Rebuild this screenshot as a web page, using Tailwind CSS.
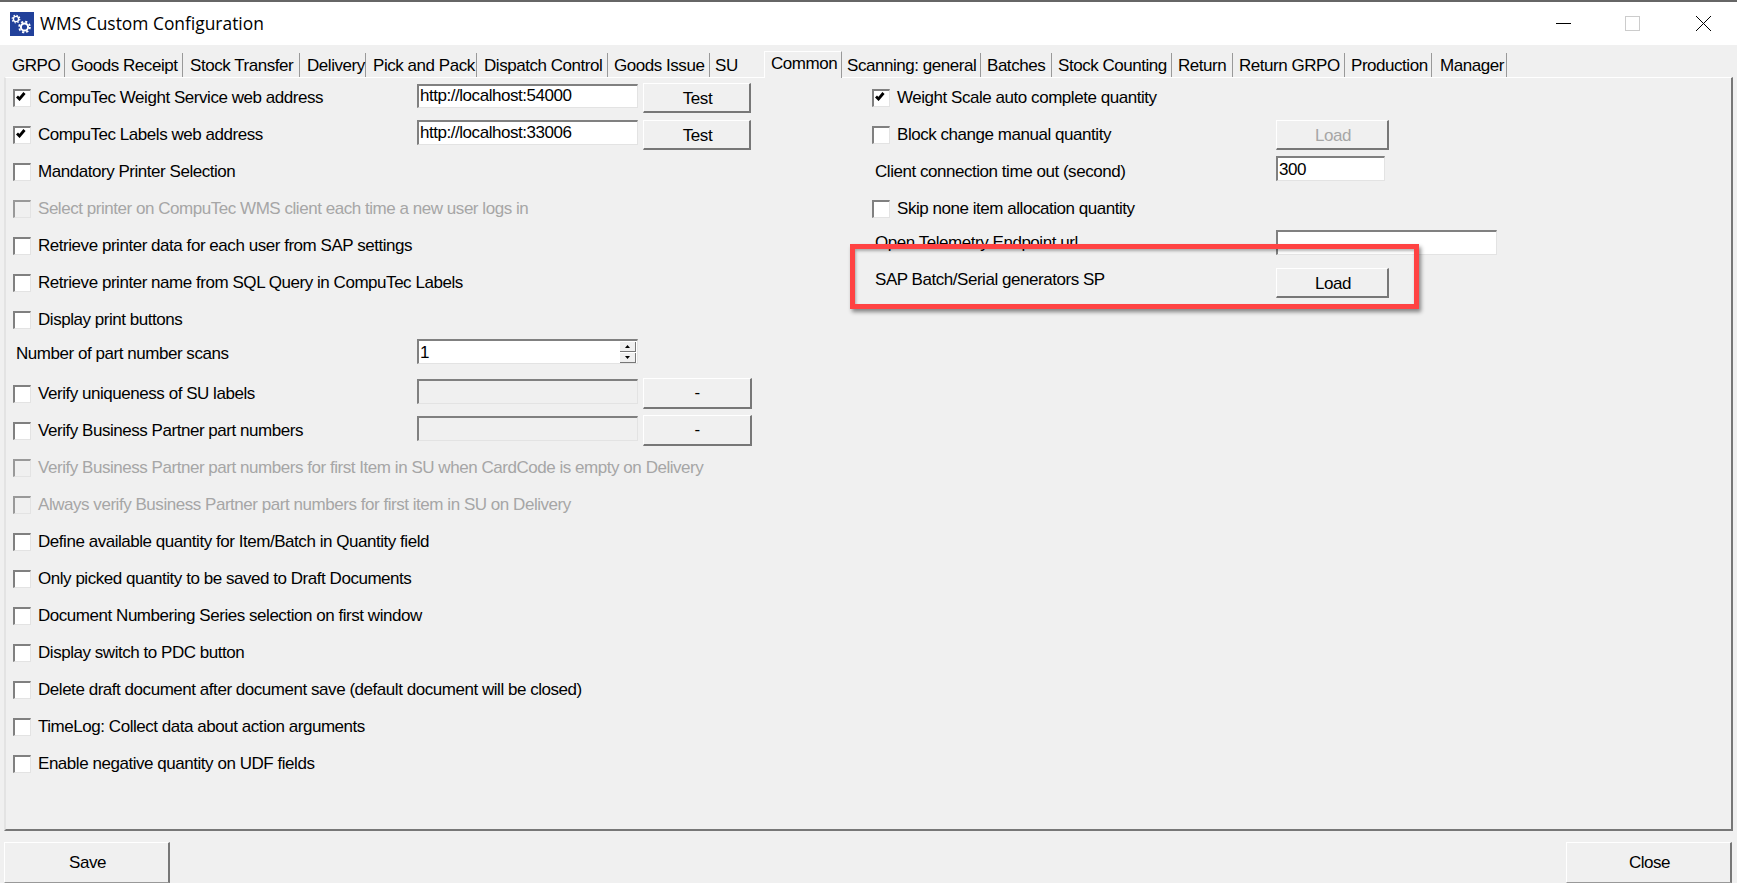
<!DOCTYPE html>
<html lang="en">
  <head>
    <meta charset="UTF-8" />
    <title>WMS Custom Configuration</title>
    <script src="https://cdn.jsdelivr.net/npm/@tailwindcss/browser@4"></script>
  </head>
  <body class="relative h-[883px] w-[1737px] overflow-hidden bg-[#f0f0f0] font-['Liberation_Sans',sans-serif] text-[17px] tracking-[-0.46px] whitespace-nowrap text-black">
    <!-- title bar -->
    <header class="flex h-[45px] items-center border-t-2 border-[#666] bg-white pl-[10px] tracking-normal">
      <svg class="h-6 w-6" viewBox="0 0 24 24">
        <rect width="24" height="24" fill="#21409a" />
        <g fill="none" stroke="#fff">
          <circle cx="6" cy="7" r="2.6" stroke-width="1.4" />
          <circle cx="6" cy="7" r="3.8" stroke-width="1.2" stroke-dasharray="1.4 1.58" />
          <circle cx="14.5" cy="15" r="3.6" stroke-width="2" />
          <circle cx="14.5" cy="15" r="5.4" stroke-width="1.8" stroke-dasharray="2.2 2.05" />
        </g>
      </svg>
      <span class="ml-[6px] font-['Open_Sans',sans-serif] text-[17.4px]">WMS Custom Configuration</span>
      <div class="ml-auto flex items-center pr-[26px]">
        <div class="h-px w-[15px] bg-black"></div>
        <div class="ml-[54px] h-[15px] w-[15px] border border-[#ccc]"></div>
        <svg class="ml-[56px] h-[15px] w-[15px]" viewBox="0 0 15 15"><path d="M0 0L15 15M15 0L0 15" stroke="#000" stroke-width="1" /></svg>
      </div>
    </header>

    <!-- tabs -->
    <nav class="mt-[8px] flex h-[24px] items-stretch pl-[7px] leading-[26px]">
      <div class="w-[58px] border-r border-[#999] pl-[5px]">GRPO</div>
      <div class="w-[118px] border-r border-[#999] pl-[6px]">Goods Receipt</div>
      <div class="w-[117px] border-r border-[#999] pl-[7px]">Stock Transfer</div>
      <div class="w-[66px] border-r border-[#999] pl-[7px]">Delivery</div>
      <div class="w-[111px] border-r border-[#999] pl-[7px]">Pick and Pack</div>
      <div class="w-[131px] border-r border-[#999] pl-[7px]">Dispatch Control</div>
      <div class="w-[102px] border-r border-[#999] pl-[6px]">Goods Issue</div>
      <div class="w-[54px] pl-[5px]">SU</div>
      <div class="z-10 -mt-[2px] -mb-[1px] w-[78px] border-t border-r border-l border-t-white border-r-[#999] border-l-white bg-[#f0f0f0] pl-[6px] leading-[23px]">Common</div>
      <div class="w-[139px] border-r border-[#999] pl-[5px]">Scanning: general</div>
      <div class="w-[71px] border-r border-[#999] pl-[6px]">Batches</div>
      <div class="w-[120px] border-r border-[#999] pl-[6px]">Stock Counting</div>
      <div class="w-[61px] border-r border-[#999] pl-[6px]">Return</div>
      <div class="w-[112px] border-r border-[#999] pl-[6px]">Return GRPO</div>
      <div class="w-[87px] border-r border-[#999] pl-[6px]">Production</div>
      <div class="w-[75px] border-r border-[#999] pl-[8px]">Manager</div>
    </nav>

    <!-- Common tab -->
    <main class="mx-[4px] flex h-[754px] border-t border-r-2 border-b-2 border-l-2 border-t-white border-r-[#777] border-b-[#777] border-l-[#e3e3e3] pt-[1px]">
      <section class="w-[866px] flex-none">
        <div class="flex h-[37px] items-center">
          <span class="ml-[7px] h-[18px] w-[18px] flex-none border-t-2 border-r border-b border-l-2 border-t-[#808080] border-r-[#e3e3e3] border-b-[#e3e3e3] border-l-[#808080] bg-white pt-[1px] pl-[1px]">
            <svg class="h-[9px] w-[10px]" viewBox="0 0 10 9"><path d="M1 4.5L3.5 7L8.5 1" fill="none" stroke="#000" stroke-width="2.8" /></svg>
          </span>
          <span class="ml-[7px] w-[379px]">CompuTec Weight Service web address</span>
          <input class="mb-[4px] h-[24px] w-[221px] border-t-2 border-r border-b border-l-2 border-t-[#808080] border-r-[#e3e3e3] border-b-[#e3e3e3] border-l-[#808080] bg-white pl-[1px]" value="http://localhost:54000" />
          <button class="ml-[5px] h-[30px] w-[108px] border-t border-r-2 border-b-2 border-l border-t-white border-r-[#777] border-b-[#777] border-l-white pt-[2px] pl-[2px]">Test</button>
        </div>
        <div class="flex h-[37px] items-center">
          <span class="ml-[7px] h-[18px] w-[18px] flex-none border-t-2 border-r border-b border-l-2 border-t-[#808080] border-r-[#e3e3e3] border-b-[#e3e3e3] border-l-[#808080] bg-white pt-[1px] pl-[1px]">
            <svg class="h-[9px] w-[10px]" viewBox="0 0 10 9"><path d="M1 4.5L3.5 7L8.5 1" fill="none" stroke="#000" stroke-width="2.8" /></svg>
          </span>
          <span class="ml-[7px] w-[379px]">CompuTec Labels web address</span>
          <input class="mb-[5px] h-[25px] w-[221px] border-t-2 border-r border-b border-l-2 border-t-[#808080] border-r-[#e3e3e3] border-b-[#e3e3e3] border-l-[#808080] bg-white pl-[1px]" value="http://localhost:33006" />
          <button class="ml-[5px] h-[30px] w-[108px] border-t border-r-2 border-b-2 border-l border-t-white border-r-[#777] border-b-[#777] border-l-white pt-[2px] pl-[2px]">Test</button>
        </div>
        <div class="flex h-[37px] items-center">
          <span class="ml-[7px] h-[18px] w-[18px] flex-none border-t-2 border-r border-b border-l-2 border-t-[#808080] border-r-[#e3e3e3] border-b-[#e3e3e3] border-l-[#808080] bg-white"></span>
          <span class="ml-[7px]">Mandatory Printer Selection</span>
        </div>
        <div class="flex h-[37px] items-center text-[#a6a6a6]">
          <span class="ml-[7px] h-[18px] w-[18px] flex-none border-t-2 border-r border-b border-l-2 border-t-[#999] border-r-[#e3e3e3] border-b-[#e3e3e3] border-l-[#999]"></span>
          <span class="ml-[7px]">Select printer on CompuTec WMS client each time a new user logs in</span>
        </div>
        <div class="flex h-[37px] items-center">
          <span class="ml-[7px] h-[18px] w-[18px] flex-none border-t-2 border-r border-b border-l-2 border-t-[#808080] border-r-[#e3e3e3] border-b-[#e3e3e3] border-l-[#808080] bg-white"></span>
          <span class="ml-[7px]">Retrieve printer data for each user from SAP settings</span>
        </div>
        <div class="flex h-[37px] items-center">
          <span class="ml-[7px] h-[18px] w-[18px] flex-none border-t-2 border-r border-b border-l-2 border-t-[#808080] border-r-[#e3e3e3] border-b-[#e3e3e3] border-l-[#808080] bg-white"></span>
          <span class="ml-[7px]">Retrieve printer name from SQL Query in CompuTec Labels</span>
        </div>
        <div class="flex h-[37px] items-center">
          <span class="ml-[7px] h-[18px] w-[18px] flex-none border-t-2 border-r border-b border-l-2 border-t-[#808080] border-r-[#e3e3e3] border-b-[#e3e3e3] border-l-[#808080] bg-white"></span>
          <span class="ml-[7px]">Display print buttons</span>
        </div>
        <div class="flex h-[31px] items-center">
          <span class="ml-[10px] w-[401px]">Number of part number scans</span>
          <div class="mb-[4px] flex h-[25px] w-[221px] items-center justify-between border-t-2 border-r border-b border-l-2 border-t-[#808080] border-r-[#e3e3e3] border-b-[#e3e3e3] border-l-[#808080] bg-white pl-[1px]">
            <span class="pt-[2px]">1</span>
            <div class="mr-px flex w-[16px] flex-col gap-px">
              <div class="flex h-[10px] items-center justify-center border-r border-b border-r-[#777] border-b-[#777] bg-[#f0f0f0]">
                <svg class="h-[3px] w-[5px]" viewBox="0 0 5 3"><path d="M2.5 0L5 3H0Z" fill="#000" /></svg>
              </div>
              <div class="flex h-[10px] items-center justify-center border-r border-b border-r-[#777] border-b-[#777] bg-[#f0f0f0]">
                <svg class="h-[3px] w-[5px]" viewBox="0 0 5 3"><path d="M0 0H5L2.5 3Z" fill="#000" /></svg>
              </div>
            </div>
          </div>
        </div>
        <div class="mt-[6px] flex h-[37px] items-center">
          <span class="ml-[7px] h-[18px] w-[18px] flex-none border-t-2 border-r border-b border-l-2 border-t-[#808080] border-r-[#e3e3e3] border-b-[#e3e3e3] border-l-[#808080] bg-white"></span>
          <span class="ml-[7px] w-[379px]">Verify uniqueness of SU labels</span>
          <div class="mb-[5px] h-[25px] w-[221px] border-t-2 border-r border-b border-l-2 border-t-[#808080] border-r-[#e3e3e3] border-b-[#e3e3e3] border-l-[#808080]"></div>
          <button class="ml-[5px] h-[31px] w-[109px] border-t border-r-2 border-b-2 border-l border-t-white border-r-[#777] border-b-[#777] border-l-white">-</button>
        </div>
        <div class="flex h-[37px] items-center">
          <span class="ml-[7px] h-[18px] w-[18px] flex-none border-t-2 border-r border-b border-l-2 border-t-[#808080] border-r-[#e3e3e3] border-b-[#e3e3e3] border-l-[#808080] bg-white"></span>
          <span class="ml-[7px] w-[379px]">Verify Business Partner part numbers</span>
          <div class="mb-[5px] h-[25px] w-[221px] border-t-2 border-r border-b border-l-2 border-t-[#808080] border-r-[#e3e3e3] border-b-[#e3e3e3] border-l-[#808080]"></div>
          <button class="ml-[5px] h-[31px] w-[109px] border-t border-r-2 border-b-2 border-l border-t-white border-r-[#777] border-b-[#777] border-l-white">-</button>
        </div>
        <div class="flex h-[37px] items-center text-[#a6a6a6]">
          <span class="ml-[7px] h-[18px] w-[18px] flex-none border-t-2 border-r border-b border-l-2 border-t-[#999] border-r-[#e3e3e3] border-b-[#e3e3e3] border-l-[#999]"></span>
          <span class="ml-[7px]">Verify Business Partner part numbers for first Item in SU when CardCode is empty on Delivery</span>
        </div>
        <div class="flex h-[37px] items-center text-[#a6a6a6]">
          <span class="ml-[7px] h-[18px] w-[18px] flex-none border-t-2 border-r border-b border-l-2 border-t-[#999] border-r-[#e3e3e3] border-b-[#e3e3e3] border-l-[#999]"></span>
          <span class="ml-[7px]">Always verify Business Partner part numbers for first item in SU on Delivery</span>
        </div>
        <div class="flex h-[37px] items-center">
          <span class="ml-[7px] h-[18px] w-[18px] flex-none border-t-2 border-r border-b border-l-2 border-t-[#808080] border-r-[#e3e3e3] border-b-[#e3e3e3] border-l-[#808080] bg-white"></span>
          <span class="ml-[7px]">Define available quantity for Item/Batch in Quantity field</span>
        </div>
        <div class="flex h-[37px] items-center">
          <span class="ml-[7px] h-[18px] w-[18px] flex-none border-t-2 border-r border-b border-l-2 border-t-[#808080] border-r-[#e3e3e3] border-b-[#e3e3e3] border-l-[#808080] bg-white"></span>
          <span class="ml-[7px]">Only picked quantity to be saved to Draft Documents</span>
        </div>
        <div class="flex h-[37px] items-center">
          <span class="ml-[7px] h-[18px] w-[18px] flex-none border-t-2 border-r border-b border-l-2 border-t-[#808080] border-r-[#e3e3e3] border-b-[#e3e3e3] border-l-[#808080] bg-white"></span>
          <span class="ml-[7px]">Document Numbering Series selection on first window</span>
        </div>
        <div class="flex h-[37px] items-center">
          <span class="ml-[7px] h-[18px] w-[18px] flex-none border-t-2 border-r border-b border-l-2 border-t-[#808080] border-r-[#e3e3e3] border-b-[#e3e3e3] border-l-[#808080] bg-white"></span>
          <span class="ml-[7px]">Display switch to PDC button</span>
        </div>
        <div class="flex h-[37px] items-center">
          <span class="ml-[7px] h-[18px] w-[18px] flex-none border-t-2 border-r border-b border-l-2 border-t-[#808080] border-r-[#e3e3e3] border-b-[#e3e3e3] border-l-[#808080] bg-white"></span>
          <span class="ml-[7px]">Delete draft document after document save (default document will be closed)</span>
        </div>
        <div class="flex h-[37px] items-center">
          <span class="ml-[7px] h-[18px] w-[18px] flex-none border-t-2 border-r border-b border-l-2 border-t-[#808080] border-r-[#e3e3e3] border-b-[#e3e3e3] border-l-[#808080] bg-white"></span>
          <span class="ml-[7px]">TimeLog: Collect data about action arguments</span>
        </div>
        <div class="flex h-[37px] items-center">
          <span class="ml-[7px] h-[18px] w-[18px] flex-none border-t-2 border-r border-b border-l-2 border-t-[#808080] border-r-[#e3e3e3] border-b-[#e3e3e3] border-l-[#808080] bg-white"></span>
          <span class="ml-[7px]">Enable negative quantity on UDF fields</span>
        </div>
      </section>

      <section class="flex-1">
        <div class="flex h-[37px] items-center">
          <span class="h-[18px] w-[18px] flex-none border-t-2 border-r border-b border-l-2 border-t-[#808080] border-r-[#e3e3e3] border-b-[#e3e3e3] border-l-[#808080] bg-white pt-[1px] pl-[1px]">
            <svg class="h-[9px] w-[10px]" viewBox="0 0 10 9"><path d="M1 4.5L3.5 7L8.5 1" fill="none" stroke="#000" stroke-width="2.8" /></svg>
          </span>
          <span class="ml-[7px]">Weight Scale auto complete quantity</span>
        </div>
        <div class="flex h-[37px] items-center">
          <span class="h-[18px] w-[18px] flex-none border-t-2 border-r border-b border-l-2 border-t-[#808080] border-r-[#e3e3e3] border-b-[#e3e3e3] border-l-[#808080] bg-white"></span>
          <span class="ml-[7px] w-[379px]">Block change manual quantity</span>
          <button class="h-[30px] w-[113px] border-t border-r-2 border-b-2 border-l border-t-white border-r-[#777] border-b-[#777] border-l-white pt-[2px] pl-[2px] text-[#a6a6a6]">Load</button>
        </div>
        <div class="flex h-[37px] items-center">
          <span class="ml-[3px] w-[401px]">Client connection time out (second)</span>
          <input class="mb-[6px] h-[25px] w-[109px] border-t-2 border-r border-b border-l-2 border-t-[#808080] border-r-[#e3e3e3] border-b-[#e3e3e3] border-l-[#808080] bg-white pt-[2px] pl-[1px]" value="300" />
        </div>
        <div class="flex h-[37px] items-center">
          <span class="h-[18px] w-[18px] flex-none border-t-2 border-r border-b border-l-2 border-t-[#808080] border-r-[#e3e3e3] border-b-[#e3e3e3] border-l-[#808080] bg-white"></span>
          <span class="ml-[7px]">Skip none item allocation quantity</span>
        </div>
        <div class="flex h-[37px] items-center">
          <span class="mb-[6px] ml-[3px] w-[401px]">Open Telemetry Endpoint url</span>
          <input class="mb-[6px] h-[25px] w-[221px] border-t-2 border-r border-b border-l-2 border-t-[#808080] border-r-[#e3e3e3] border-b-[#e3e3e3] border-l-[#808080] bg-white" />
        </div>
        <div class="flex h-[37px] items-center">
          <span class="mb-[5px] ml-[3px] w-[401px]">SAP Batch/Serial generators SP</span>
          <button class="h-[30px] w-[113px] border-t border-r-2 border-b-2 border-l border-t-white border-r-[#777] border-b-[#777] border-l-white pt-[2px] pl-[2px]">Load</button>
        </div>
      </section>
    </main>

    <footer class="mt-[11px] flex justify-between px-[4px]">
      <button class="h-[41px] w-[166px] border-t border-r-2 border-b border-l border-t-white border-r-[#777] border-b-[#999] border-l-white pl-[2px]">Save</button>
      <button class="mr-px h-[41px] w-[166px] border-t border-r-2 border-b border-l border-t-white border-r-[#777] border-b-[#999] border-l-white pl-[2px]">Close</button>
    </footer>

    <!-- red callout drawn on the screenshot -->
    <div class="absolute top-[244px] left-[850px] h-[65px] w-[569px] border-[5px] border-[#ff4343] shadow-[2px_3px_4px_rgba(0,0,0,0.45),inset_1px_2px_3px_rgba(0,0,0,0.3)]"></div>
  </body>
</html>
